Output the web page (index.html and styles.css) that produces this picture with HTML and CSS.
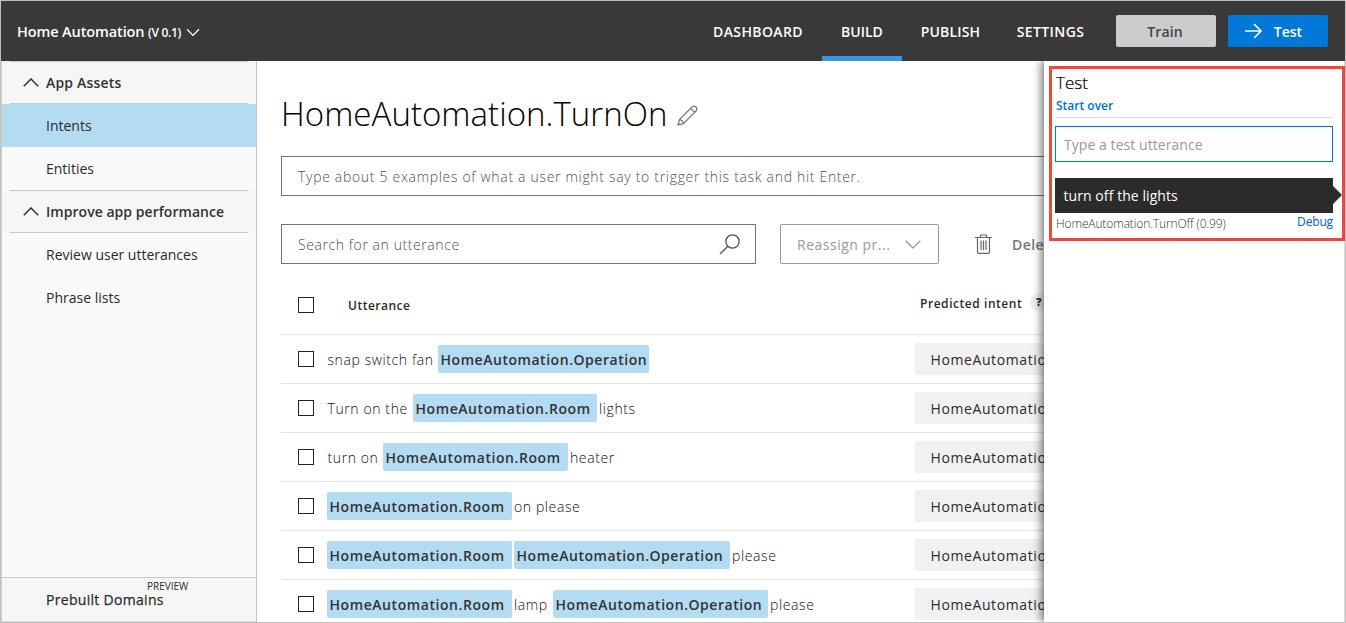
FILE: index.html
```html
<!DOCTYPE html>
<html lang="en">
<head>
<meta charset="utf-8">
<title>Home Automation</title>
<link rel="stylesheet" href="styles.css">
</head>
<body>
<div class="app">
  <header class="topbar">
    <div class="brand"><span class="brand-name">Home Automation</span><span class="brand-version">(V 0.1)</span>
      <svg class="brand-chevron" width="14" height="9" viewBox="0 0 14 9"><path d="M1 1.2 7 7.4 13 1.2"/></svg>
    </div>
    <nav class="nav">
      <a class="nav-item nav-dashboard">DASHBOARD</a>
      <a class="nav-item nav-build active">BUILD</a>
      <a class="nav-item nav-publish">PUBLISH</a>
      <a class="nav-item nav-settings">SETTINGS</a>
    </nav>
    <button class="btn btn-train">Train</button>
    <button class="btn btn-test"><svg width="17" height="16" viewBox="0 0 17 16"><path d="M0 8H15.500M9 1 16 8 9 15"/></svg><span>Test</span></button>
  </header>
  <div class="body">
    <aside class="sidebar">
      <div class="group"><svg width="16" height="9" viewBox="0 0 16 9"><path d="M.8 8.200 8 1 15.200 8.200"/></svg><span class="t-assets">App Assets</span></div>
      <a class="side-item selected"><span>Intents</span></a>
      <a class="side-item"><span>Entities</span></a>
      <div class="group"><svg width="16" height="9" viewBox="0 0 16 9"><path d="M.8 8.200 8 1 15.200 8.200"/></svg><span class="t-improve">Improve app performance</span></div>
      <a class="side-item"><span>Review user utterances</span></a>
      <a class="side-item"><span>Phrase lists</span></a>
      <div class="side-footer"><span class="preview">PREVIEW</span><span class="prebuilt">Prebuilt Domains</span></div>
    </aside>
    <main class="main">
      <div class="title-row">
        <h1>HomeAutomation.TurnOn</h1>
        <svg class="pencil" width="21" height="21" viewBox="0 0 21 21"><path d="M1 20 2.400 14.600 15 2Q17 .2 19 2 20.700 4 19 6L6.400 18.600ZM2.400 14.600Q5.700 15 6.400 18.600M13.600 3.400 17.600 7.400M1.400 18.200 2.800 19.600"/></svg>
      </div>
      <div class="field example-field"><span>Type about 5 examples of what a user might say to trigger this task and hit Enter.</span></div>
      <div class="toolbar">
        <div class="field search-field"><span>Search for an utterance</span>
          <svg width="22" height="21" viewBox="0 0 22 21"><circle cx="13.500" cy="7.500" r="6.600"/><path d="M8.800 12.200 1 20"/></svg>
        </div>
        <div class="reassign"><span>Reassign pr...</span><svg width="16" height="9" viewBox="0 0 16 9"><path d="M.7.8 8 8 15.300.8"/></svg></div>
        <svg class="trash" width="17" height="20" viewBox="0 0 17 20"><path d="M0 3.500H17M5.500 3V1H11.500V3M2.500 4V18Q2.500 19.300 4 19.300H13Q14.500 19.300 14.500 18V4M6 6.500V16M8.500 6.500V16M11 6.500V16"/></svg>
        <span class="delete">Delete</span>
      </div>
      <div class="table">
        <div class="row head"><i class="check"></i><span class="col-name">Utterance</span><span class="col-intent">Predicted intent</span><b class="help">?</b></div>
        <div class="row"><i class="check"></i><div class="utterance"><span class="w w-snap">snap switch fan</span><mark class="op">HomeAutomation.Operation</mark></div><div class="intent">HomeAutomation.TurnOn</div></div>
        <div class="row"><i class="check"></i><div class="utterance"><span class="w w-turnthe">Turn on the</span><mark class="room short">HomeAutomation.Room</mark><span class="w">lights</span></div><div class="intent">HomeAutomation.TurnOn</div></div>
        <div class="row"><i class="check"></i><div class="utterance"><span class="w w-turnon">turn on</span><mark class="room">HomeAutomation.Room</mark><span class="w">heater</span></div><div class="intent">HomeAutomation.TurnOn</div></div>
        <div class="row"><i class="check"></i><div class="utterance"><mark class="room">HomeAutomation.Room</mark><span class="w">on please</span></div><div class="intent">HomeAutomation.TurnOn</div></div>
        <div class="row"><i class="check"></i><div class="utterance"><mark class="room">HomeAutomation.Room</mark><mark class="op wide">HomeAutomation.Operation</mark><span class="w">please</span></div><div class="intent">HomeAutomation.TurnOn</div></div>
        <div class="row"><i class="check"></i><div class="utterance"><mark class="room">HomeAutomation.Room</mark><span class="w w-lamp">lamp</span><mark class="op last">HomeAutomation.Operation</mark><span class="w">please</span></div><div class="intent">HomeAutomation.TurnOn</div></div>
      </div>
    </main>
    <section class="test-panel">
      <div class="highlight">
        <h2>Test</h2>
        <a class="start-over">Start over</a>
        <div class="test-input"><span>Type a test utterance</span></div>
        <div class="bubble"><span>turn off the lights</span></div>
        <div class="result"><span class="result-intent">HomeAutomation.TurnOff (0.99)</span><a class="debug">Debug</a></div>
      </div>
    </section>
  </div>
</div>
</body>
</html>
```
FILE: styles.css
```css
* { box-sizing: border-box; }
body { margin: 0; font-family: "Open Sans", "Noto Sans", sans-serif; color: #2b2b2b; }
svg { fill: none; stroke: currentColor; stroke-width: 1.3; flex: none; display: block; }
.app { width: 1346px; height: 623px; border: 1px solid #c0c0c0; background: #fff; display: flex; flex-direction: column; overflow: hidden; white-space: nowrap; }

.topbar { height: 60px; flex: none; background: #393939; color: #fff; display: flex; align-items: center; padding: 0 17px 0 16px; }
.brand { display: flex; align-items: center; margin-right: auto; font-weight: 600; }
.brand-name { font-size: 14.5px; width: 131px; letter-spacing: -.12px; }
.brand-version { font-size: 12px; width: 38px; letter-spacing: -.3px; padding-top: 2px; }
.brand-chevron { margin-top: 3px; }
.nav { display: flex; height: 60px; }
.nav-item { display: flex; align-items: center; justify-content: center; font-size: 14px; font-weight: 600; padding-top: 0; }
.nav-dashboard { width: 128px; letter-spacing: .4px; }
.nav-build { width: 80px; }
.nav-publish { width: 97px; letter-spacing: .15px; }
.nav-settings { width: 103px; letter-spacing: .4px; }
.nav-item.active { border-bottom: 5px solid #3a96dd; padding-top: 5px; }
.btn { width: 100px; height: 32px; border: 0; border-radius: 2px; padding: 0; font: 600 14px "Open Sans", sans-serif; display: flex; align-items: center; justify-content: center; }
.btn-train { background: #ccc; color: #444; margin: 0 12px 0 14px; padding-right: 2px; letter-spacing: .1px; }
.btn-test { background: #0078d7; color: #fff; gap: 12px; padding-right: 9px; }
.btn-test svg { stroke-width: 1.6; }

.body { flex: 1; min-height: 0; display: flex; position: relative; }
.sidebar { width: 256px; flex: none; border-left: 1px solid #d0d0d0; border-right: 1px solid #c8c8c8; background: #fafafa; display: flex; flex-direction: column; font-size: 14px; }
.group { height: 43px; background: linear-gradient(#c8c8c8, #c8c8c8) 8px 0 / 238px 1px no-repeat, linear-gradient(#c8c8c8, #c8c8c8) 8px 42px / 238px 1px no-repeat, #f6f6f6; display: flex; align-items: center; padding-left: 21px; gap: 7px; font-weight: 600; color: #333; }
.group svg { stroke-width: 1.5; }
.t-assets { letter-spacing: .18px; }
.t-improve { letter-spacing: .04px; }
.side-item { height: 43px; display: flex; align-items: center; padding-left: 44px; }
.selected { background: #b3dbf2; }
.side-footer { margin-top: auto; height: 45px; border-top: 1px solid #c8c8c8; border-bottom: 1px solid #ddd; background: #f6f6f6; display: flex; flex-direction: column; padding-left: 44px; }
.preview { font-size: 10px; line-height: 10px; margin: 3px 0 0 101px; }
.prebuilt { line-height: 16px; margin-top: 1px; letter-spacing: .3px; -webkit-text-stroke: .25px #2b2b2b; }

.main { flex: 1; padding: 31px 0 0 24px; overflow: hidden; }
.title-row { display: flex; align-items: center; height: 44px; }
h1 { margin: 0; font-size: 33px; font-weight: 300; color: #000; line-height: 44px; width: 396px; letter-spacing: .04px; }
.pencil { color: #777; stroke-width: 1.200; margin-top: 2px; }
.field { border: 1px solid #767676; height: 40px; display: flex; align-items: center; padding-left: 16px; font-size: 14px; color: #505050; font-weight: 300; }
.example-field { margin-top: 20px; letter-spacing: .685px; }
.toolbar { display: flex; align-items: center; margin-top: 28px; height: 40px; }
.search-field { width: 475px; justify-content: space-between; padding-right: 14px; letter-spacing: .58px; }
.reassign { margin-left: 24px; width: 159px; height: 40px; border: 1px solid #999; border-radius: 2px; display: flex; align-items: center; justify-content: space-between; padding: 0 17px 0 16px; font-size: 14px; color: #999; letter-spacing: .5px; }
.trash { margin-left: 36px; color: #666; stroke-width: 1.200; }
.delete { margin-left: 20px; font-size: 14px; font-weight: 600; color: #777; letter-spacing: .4px; }
.table { margin-top: 12px; }
.row { height: 49px; border-bottom: 1px solid #e3e3e3; display: flex; align-items: center; padding-left: 17px; font-size: 14px; }
.row.head { height: 59px; font-size: 12px; font-weight: 600; letter-spacing: .55px; }
.check { width: 16px; height: 16px; border: 1px solid #222; flex: none; }
.col-name { margin-left: 34px; width: 572px; letter-spacing: .5px; }
.col-intent { width: 110px; margin-top: -4px; }
.help { width: 18px; height: 18px; border-radius: 9px; background: #eee; text-align: center; line-height: 18px; font-size: 11px; margin-top: -6px; }
.utterance { width: 588px; flex: none; margin-left: 13px; display: flex; align-items: center; }
.w { letter-spacing: .6px; font-weight: 300; color: #111; }
.w-snap, .w-turnthe, .w-turnon { padding-left: .5px; }
mark { background: #b3dbf2; color: #333; height: 28px; line-height: 29px; border-radius: 2px; padding-left: 2.5px; font-weight: 600; margin-right: 2px; flex: none; letter-spacing: .57px; }
.op { width: 211px; letter-spacing: .54px; }
.op.wide { width: 216px; }
.op.last { width: 215px; }
.room { width: 185px; }
.room.short { width: 184px; }
.w-snap { width: 111px; }
.w-turnthe { width: 86px; }
.w-turnon { width: 56px; }
.w-lamp { width: 39px; }
.intent { background: #f1f1f1; height: 32px; line-height: 33px; width: 200px; flex: none; padding-left: 15.5px; letter-spacing: .6px; }

.test-panel { position: absolute; left: 1043px; top: 0; right: 0; bottom: 0; background: #fff; border-right: 1px solid #ddd; box-shadow: -2px 0 9px rgba(0, 0, 0, .6); clip-path: inset(0 0 0 -20px); }
.highlight { position: absolute; left: 5px; top: 5px; width: 296px; height: 175px; border: 3px solid #f04837; padding: 3px 9px 0 3px; display: flex; flex-direction: column; }
h2 { margin: 0; padding-left: 1px; font-size: 17px; line-height: 22px; font-weight: 300; color: #000; -webkit-text-stroke: .2px #000; }
.start-over { font-size: 12px; padding-left: 1px; font-weight: 600; color: #0072d0; line-height: 24px; height: 24px; border-bottom: 1px solid #ddd; }
.test-input { margin-top: 8px; height: 36px; border: 1px solid #0078d7; padding-left: 8px; line-height: 36px; font-size: 14px; color: #999; flex: none; letter-spacing: .06px; }
.bubble { margin-top: 16px; height: 35px; background: #2b2b2b; color: #fff; font-size: 14px; line-height: 35px; padding-left: 8.5px; position: relative; flex: none; letter-spacing: .07px; }
.bubble::after { content: ""; position: absolute; left: 100%; top: 8px; border: 9px solid transparent; border-left-color: #2b2b2b; border-right-width: 0; }
.result { display: flex; justify-content: space-between; font-size: 12px; line-height: 20px; padding-left: 1px; }
.result-intent { color: #333; font-weight: 300; letter-spacing: -.13px; padding-top: 1px; }
.debug { color: #0060d0; letter-spacing: -.15px; margin-top: -1px; }
```
